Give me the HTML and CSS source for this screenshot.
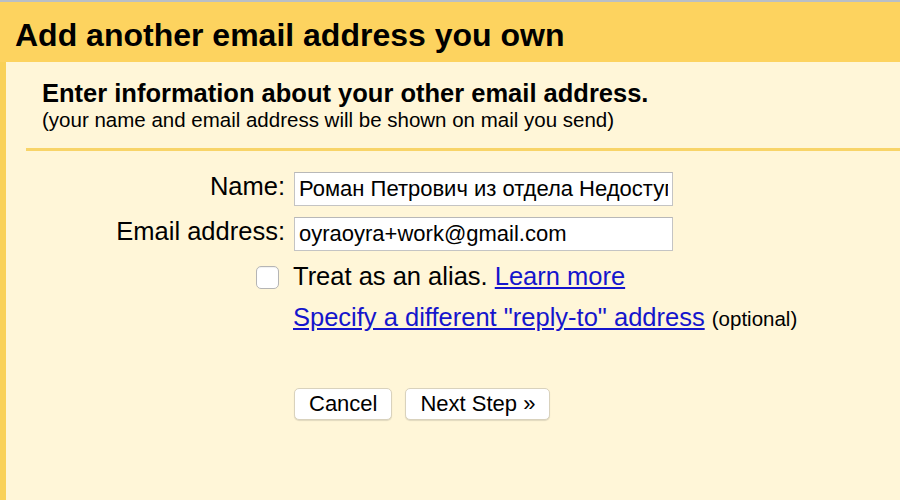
FILE: index.html
```html
<!DOCTYPE html>
<html>
<head>
<meta charset="utf-8">
<link rel="stylesheet" href="styles.css">
</head>
<body>
<div class="page">
  <div class="header"><h1 class="title">Add another email address you own</h1></div>
  <div class="panel">
    <div class="intro">
      <div class="intro-head">Enter information about your other email address.</div>
      <div class="intro-sub">(your name and email address will be shown on mail you send)</div>
    </div>
    <div class="sep"></div>
    <div class="form">
      <div class="row row-field">
        <label class="lbl" for="nm">Name:</label>
        <input class="txt" id="nm" type="text" value="Роман Петрович из отдела Недоступных писем">
      </div>
      <div class="row row-field row-gap">
        <label class="lbl" for="em">Email address:</label>
        <input class="txt" id="em" type="text" value="oyraoyra+work@gmail.com">
      </div>
      <div class="row row-check">
        <div class="cell-check"><span class="checkbox"></span></div>
        <div class="check-text">Treat as an alias. <a class="link" href="#">Learn more</a></div>
      </div>
      <div class="row row-link">
        <div></div>
        <div class="link-line"><a class="link" href="#">Specify a different "reply-to" address</a> <span class="optional">(optional)</span></div>
      </div>
      <div class="row row-buttons">
        <div></div>
        <div class="buttons">
          <button class="btn" type="button">Cancel</button>
          <button class="btn" type="button">Next Step »</button>
        </div>
      </div>
    </div>
  </div>
</div>
</body>
</html>
```
FILE: styles.css
```css
html, body {
  margin: 0;
  padding: 0;
  height: 100%;
}
body {
  font-family: "Liberation Sans", Arial, Helvetica, sans-serif;
  color: #000;
  background: #fff6d8;
  overflow: hidden;
}
.page {
  border-top: 2px solid #b9bfc7;
  min-height: 498px;
  display: flex;
  flex-direction: column;
}
.header {
  background: #fdd35f;
  height: 60px;
  box-sizing: border-box;
  padding: 15px 15px 0;
}
.title {
  margin: 0;
  font-size: 32px;
  font-weight: bold;
  line-height: normal;
  white-space: nowrap;
}
.panel {
  flex: 1;
  background: #fff6d8;
  border-left: 6px solid #f9d158;
}
.intro {
  padding: 17px 0 0 36px;
}
.intro-head {
  font-size: 25.5px;
  font-weight: bold;
  white-space: nowrap;
}
.intro-sub {
  font-size: 20.5px;
  white-space: nowrap;
}
.sep {
  margin: 16px 0 0 20px;
  height: 3px;
  background: #f8d468;
}
.form {
  padding-top: 21px;
  display: flex;
  flex-direction: column;
}
.row {
  display: grid;
  grid-template-columns: 279px 1fr;
  column-gap: 9px;
  align-items: center;
}
.row-field {
  height: 34px;
}
.row-gap {
  margin-top: 11px;
}
.lbl {
  align-self: start;
  font-size: 25.5px;
  text-align: right;
  white-space: nowrap;
}
.txt {
  width: 379px;
  height: 34px;
  box-sizing: border-box;
  border: 1px solid #c4c4c4;
  border-top-color: #b8b8b8;
  background: #fff;
  padding: 0 4px;
  margin: 0;
  font-family: "Liberation Sans", Arial, sans-serif;
  font-size: 22px;
  color: #000;
  outline: none;
}
.row-check {
  height: 34px;
  margin-top: 10px;
  align-items: start;
}
.cell-check {
  display: flex;
  justify-content: flex-end;
  padding-right: 6px;
  padding-top: 5px;
}
.checkbox {
  width: 21px;
  height: 21px;
  border: 1px solid #b5b5b5;
  border-radius: 5px;
  background: #fff;
  box-shadow: inset 0 1px 1px rgba(0,0,0,0.06);
}
.check-text {
  font-size: 25.5px;
  white-space: nowrap;
  margin-left: -1px;
  padding-top: 1px;
}
.link {
  color: #1515cc;
  text-decoration: underline;
}
.row-link {
  margin-top: 8px;
}
.link-line {
  font-size: 25.5px;
  white-space: nowrap;
  margin-left: -1px;
}
.optional {
  font-size: 20.5px;
}
.row-buttons {
  margin-top: 56px;
}
.buttons {
  display: flex;
  gap: 13px;
}
.btn {
  height: 32px;
  box-sizing: border-box;
  padding: 0 14px;
  border: 1px solid #d9d2bd;
  border-radius: 5px;
  background: #fff;
  box-shadow: 0 1px 1px rgba(0,0,0,0.12);
  font-family: "Liberation Sans", Arial, sans-serif;
  font-size: 22px;
  color: #000;
  margin: 0;
}
```
